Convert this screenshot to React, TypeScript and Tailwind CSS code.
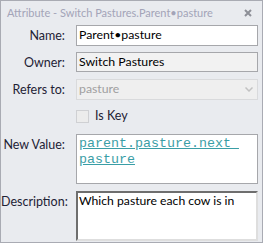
// Attribute property dialog — "Switch Pastures.Parent•pasture"

const ui = { fontFamily: 'Lato, "Open Sans", sans-serif' }

function Label({ children, top }: { children: string; top?: boolean }) {
  return (
    <div
      className={`w-[64px] shrink-0 text-right text-[12.5px] text-[#1e2235] leading-[15px] ${top ? 'pt-[3px]' : 'self-center'}`}
    >
      {children}
    </div>
  )
}

export default function App() {
  return (
    <div
      className="w-[263px] h-[243px] flex flex-col border border-[#a9abb3] bg-[#e9ebef] overflow-hidden"
      style={ui}
    >
      {/* Title bar */}
      <div className="h-[23px] shrink-0 flex items-center justify-between pl-[6px] pr-[10px]">
        <span className="text-[11px] text-[#a3a4b8] leading-none whitespace-nowrap">
          Attribute - Switch Pastures.Parent•pasture
        </span>
        <svg width="8" height="8" viewBox="0 0 8 8" className="mt-[1px]">
          <path d="M1 1L7 7M7 1L1 7" stroke="#8d8f97" strokeWidth="2" />
        </svg>
      </div>

      <div className="flex flex-col pr-[4px]">
        {/* Name */}
        <div className="flex gap-[11px] mt-[1px]">
          <Label>Name:</Label>
          <div className="flex-1 h-[21px] border border-[#a6a7ab] bg-white px-[2px] flex items-center text-[12.3px] text-black">
            Parent•pasture
          </div>
        </div>

        {/* Owner */}
        <div className="flex gap-[11px] mt-[6px]">
          <Label>Owner:</Label>
          <div className="flex-1 h-[20px] border border-[#a6a7ab] bg-[#f2f2f2] px-[2px] flex items-center text-[12.3px] text-black">
            Switch Pastures
          </div>
        </div>

        {/* Refers to */}
        <div className="flex gap-[11px] mt-[7px]">
          <Label>Refers to:</Label>
          <div className="flex-1 h-[21px] border border-[#d9dadc] bg-[#efefef] pl-[2px] pr-[4px] flex items-center justify-between text-[12.3px] text-[#a0a0a0]">
            <span>pasture</span>
            <svg width="8" height="5" viewBox="0 0 8 5">
              <path d="M0.5 0.5L4 4L7.5 0.5" stroke="#c2c2c2" strokeWidth="1.5" fill="none" />
            </svg>
          </div>
        </div>

        {/* Is Key */}
        <div className="flex gap-[11px] mt-[7px] items-center">
          <div className="w-[64px] shrink-0" />
          <div className="w-[13px] h-[13px] border border-[#cfd0d3] bg-[#ececec]" />
          <span className="text-[12.5px] text-[#1e2235] ml-[-5px]">Is Key</span>
        </div>

        {/* New Value */}
        <div className="flex gap-[11px] mt-[8px]">
          <Label top>New Value:</Label>
          <div
            className="flex-1 h-[50px] border border-[#a6a7ab] bg-white pl-[2px] pt-[1px] text-[13.33px] leading-[16px] text-[#3a9ea6]"
            style={{ fontFamily: '"Liberation Mono", monospace' }}
          >
            <div className="underline whitespace-pre">parent.pasture.next </div>
            <div className="underline">pasture</div>
          </div>
        </div>

        {/* Description */}
        <div className="flex gap-[11px] mt-[7px]">
          <Label top>Description:</Label>
          <div className="flex-1 h-[50px] border-2 border-[#6e6e6e] border-r-[#dedede] border-b-[#dedede] bg-white pl-[1px] text-[12.2px] leading-[15px] text-black">
            Which pasture each cow is in
          </div>
        </div>
      </div>
    </div>
  )
}
